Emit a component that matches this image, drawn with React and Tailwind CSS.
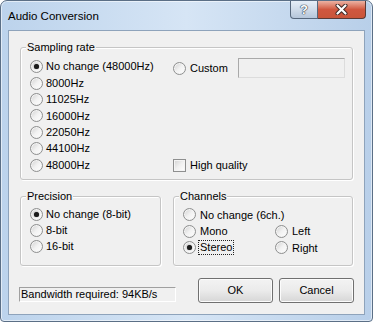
import React from 'react';

const Radio = ({ checked }) => (
  <span className="w-[13px] h-[13px] shrink-0 rounded-full border border-[#8e8f8f] bg-gradient-to-br from-[#cfcfcf] via-[#f2f2f2] to-white flex items-center justify-center shadow-[inset_0_0_0_1px_#f4f4f4]">
    {checked && <span className="w-[5px] h-[5px] rounded-full bg-[#1c1c1c] shadow-[0_0_1px_#444]" />}
  </span>
);

const Checkbox = () => (
  <span className="w-[13px] h-[13px] shrink-0 border border-[#8e8f8f] bg-gradient-to-br from-[#d2d2d2] via-[#f0f0f0] to-white shadow-[inset_0_0_0_1px_#f4f4f4]" />
);

const Option = ({ label, checked, gap = 'gap-[3px]', height = 'h-[16.4px]', focus }) => (
  <div className={`flex items-center ${gap} ${height}`}>
    <Radio checked={checked} />
    <span className={focus ? 'outline outline-1 outline-dotted outline-[#222] leading-[13px] px-[1px] -ml-[1px]' : ''}>{label}</span>
  </div>
);

const Group = ({ label, className, children }) => (
  <div className={`relative border border-[#c5c5c5] rounded-[3px] shadow-[inset_1px_1px_0_#fff,1px_1px_0_#fff] ${className}`}>
    <span className="absolute -top-[7px] left-[5px] px-[1px] leading-[13px] bg-[#f0f0f0]">{label}</span>
    {children}
  </div>
);

const Button = ({ children }) => (
  <button
    type="button"
    className="w-[75px] h-[25px] rounded-[3px] border border-[#707070] bg-gradient-to-b from-[#f3f3f3] via-[#ebebeb] to-[#d6d6d6] shadow-[inset_0_0_0_1px_#fcfcfc] text-[11px] text-black"
  >
    {children}
  </button>
);

const App = () => {
  return (
    <div className="w-[373px] h-[322px] flex flex-col rounded-t-[7px] rounded-b-[4px] border border-[#5b6f86] bg-gradient-to-r from-[#bcd3ec] via-[#d6e5f5] to-[#b8cfe9] shadow-[inset_0_0_0_1px_rgba(255,255,255,0.55)] font-['Liberation_Sans',Arial,sans-serif] text-[11px] text-black overflow-hidden">
      {/* title bar */}
      <div className="h-[29px] flex items-start shrink-0">
        <span className="pl-[7px] pt-[8px] text-[11.5px] leading-[14px]">Audio Conversion</span>
        <div className="ml-auto mr-[6px] flex">
          <div className="w-[28px] h-[18px] rounded-bl-[4px] border border-t-0 border-[#56677c] bg-gradient-to-b from-[#e6eef7] via-[#cfdbe9] to-[#b5c6da] flex items-center justify-center">
            <span className="font-bold text-[13px] leading-[14px] text-white [text-shadow:0_0_1px_#2c3646,0_0_1px_#2c3646,0_0_1px_#2c3646]">?</span>
          </div>
          <div className="w-[48px] h-[18px] rounded-br-[4px] border border-l-0 border-t-0 border-[#5a3a36] bg-gradient-to-b from-[#ebb2a3] via-[#d0573f] to-[#c9553a] flex items-center justify-center">
            <svg width="13" height="11" viewBox="0 0 13 11">
              <path d="M2.5 1.5 L10.5 9.5 M10.5 1.5 L2.5 9.5" stroke="#3b2522" strokeWidth="4" strokeLinecap="round" />
              <path d="M2.5 1.5 L10.5 9.5 M10.5 1.5 L2.5 9.5" stroke="#fff" strokeWidth="2.2" strokeLinecap="round" />
            </svg>
          </div>
        </div>
      </div>

      {/* client area */}
      <div className="mx-[7px] h-[285px] shrink-0 border border-[#8ea3bb] bg-[#f0f0f0] px-[11px] pt-[16px] flex flex-col">
        <Group label="Sampling rate" className="h-[133px] flex pl-[9px]">
          <div className="w-[143px] pt-[10.5px]">
            <Option label="No change (48000Hz)" checked />
            <Option label="8000Hz" />
            <Option label="11025Hz" />
            <Option label="16000Hz" />
            <Option label="22050Hz" />
            <Option label="44100Hz" />
            <Option label="48000Hz" />
          </div>
          <div className="flex-1 flex flex-col pt-[10px] pr-[7px] pb-[5.6px]">
            <div className="h-[20px] flex items-center gap-[4px]">
              <Radio />
              <span>Custom</span>
              <div className="ml-auto w-[107px] h-[20px] border border-[#a9a9a9] border-r-[#dcdcdc] border-b-[#dcdcdc] bg-[#f0f0f0]" />
            </div>
            <div className="mt-auto h-[16.4px] flex items-center gap-[4px]">
              <Checkbox />
              <span>High quality</span>
            </div>
          </div>
        </Group>

        <div className="mt-[16px] flex gap-[12px]">
          <Group label="Precision" className="w-[141px] h-[70px] pl-[9px] pt-[9px]">
            <Option label="No change (8-bit)" checked height="h-[16px]" />
            <Option label="8-bit" height="h-[16px]" />
            <Option label="16-bit" height="h-[16px]" />
          </Group>
          <Group label="Channels" className="flex-1 h-[70px] pl-[9px] pt-[9.5px]">
            <Option label="No change (6ch.)" gap="gap-[4px]" height="h-[16.5px]" />
            <div className="grid grid-cols-[92px_1fr]">
              <Option label="Mono" gap="gap-[4px]" height="h-[16.5px]" />
              <Option label="Left" gap="gap-[4px]" height="h-[16.5px]" />
              <Option label="Stereo" checked focus gap="gap-[4px]" height="h-[16.5px]" />
              <Option label="Right" gap="gap-[4px]" height="h-[16.5px]" />
            </div>
          </Group>
        </div>

        <div className="mt-[12px] -mx-[1px] flex items-start">
          <div className="mt-[9px] w-[157px] h-[15px] border border-[#a0a0a0] border-r-white border-b-white pl-[1px] leading-[13px]">
            Bandwidth required: 94KB/s
          </div>
          <div className="ml-auto flex gap-[6px]">
            <Button>OK</Button>
            <Button>Cancel</Button>
          </div>
        </div>
      </div>
    </div>
  );
};

export default App;
